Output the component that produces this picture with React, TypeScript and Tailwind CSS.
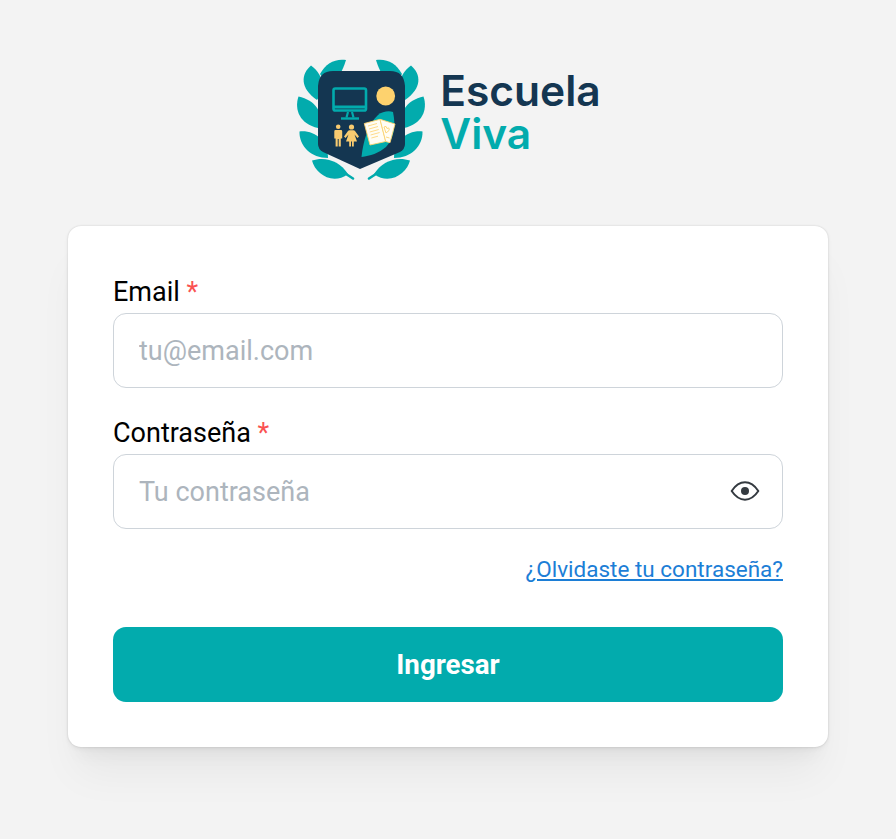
function Leaves() {
  return (
    <g fill="#02abad">
      <path d="M56 10 C45 8.500 36 13 30 24 L38 36 C48 31 53 20 56 10 Z" />
      <path d="M21 15.500 C11 24 9.500 38 27 50 C35 40 35 26 21 15.500 Z" />
      <path d="M8.500 46.500 C4 60 10 74 28 78 C35 63 25 50 8.500 46.500 Z" />
      <path d="M9.500 81.500 C9 96 21 108 38 108 C38 91 25 80 9.500 81.500 Z" />
      <path d="M22 110.500 C25 123 42 136 58 124 C50 111 35 106 22 110.500 Z" />
      <path d="M53 122 L63 128.500" stroke="#02abad" strokeWidth="2.600" strokeLinecap="round" fill="none" />
    </g>
  );
}

function Logo() {
  return (
    <svg width="150" height="140" viewBox="0 0 150 140" className="shrink-0 -ml-[3px] -my-[10px]">
      <Leaves />
      <g transform="translate(142 0) scale(-1 1)">
        <Leaves />
      </g>
      <path
        d="M28 36 Q29 21 43 21 H100 Q114 21 115 36 V94 Q115 99 110 102 L70 119 L33 102 Q28 99 28 94 Z"
        fill="#143651"
      />
      <g stroke="#02abad" fill="none" strokeWidth="2.600">
        <rect x="43.500" y="38.500" width="32.500" height="22" rx="1.800" />
        <path d="M43.500 57 H76" strokeWidth="3" />
        <path d="M58 62 L56.500 67.500 M62 62 L63.500 67.500" strokeWidth="2.200" />
        <path d="M51 68.500 H69" strokeWidth="2.400" />
      </g>
      <circle cx="95.700" cy="46" r="9.400" fill="#fdd26e" />
      <path d="M71.500 107 C73 92 78 74 88 65 C92 61.500 99 60.500 103 62 C106 76 104 88 96 97 C89 103 80 106 71.500 107 Z" fill="#02abad" />
      <g fill="#f8cb70">
        <circle cx="48.200" cy="76.800" r="2.300" />
        <path d="M45.500 80 H51 Q52.200 80 52.200 81.200 V88.500 H50.800 V96.500 H48.700 V89 H47.700 V96.500 H45.600 V88.500 H44.300 V81.200 Q44.300 80 45.500 80 Z" />
        <circle cx="61.500" cy="77" r="2.600" />
        <path d="M59.500 80.300 H63.500 Q64.500 80.300 65 81 L69 86.500 L67.500 88 L64.500 84.500 L67 91.500 H63.800 V96.500 H62 V91.500 H61 V96.500 H59.200 V91.500 H56 L58.500 84.500 L55.500 88 L54 86.500 L58 81 Q58.500 80.300 59.500 80.300 Z" />
      </g>
      <g>
        <path d="M74.300 73.500 L90 69.300 L95.700 91.500 L80 95 Z" fill="#fffdf5" stroke="#fdd26e" strokeWidth="0.900" />
        <path d="M90 69.300 L105 74 L100 92.700 L95.700 91.500 Z" fill="#fffdf5" stroke="#fdd26e" strokeWidth="0.900" />
        <path d="M78 76 L87 73.500 M79 79 L88 76.500 M79.800 82 L88.800 79.500 M80.600 85 L89.600 82.500 M81.400 88 L88 86.200" stroke="#fdd26e" strokeWidth="0.800" />
        <path d="M94 77 Q96.500 75 97 78.500 Q100 77 99 80.500 L96 83 Z M96 87 L99.500 88" stroke="#fdd26e" strokeWidth="0.900" fill="none" />
      </g>
    </svg>
  );
}

function Field({ label, placeholder, eye }: { label: string; placeholder: string; eye?: boolean }) {
  return (
    <div>
      <label className="block text-[27px] leading-[42px] text-black">
        {label} <span className="text-[#fa5252]">*</span>
      </label>
      <div className="relative">
        <input
          placeholder={placeholder}
          className="block w-full h-[75px] rounded-[13px] border border-[#ced4da] bg-white pl-[25px] pr-[60px] text-[27px] outline-none placeholder:text-[#adb5bd]"
        />
        {eye && (
          <svg
            className="absolute right-[22px] top-[21px]"
            width="32"
            height="32"
            viewBox="0 0 24 24"
            fill="none"
            stroke="#343a40"
            strokeWidth="1.500"
            strokeLinecap="round"
            strokeLinejoin="round"
          >
            <path d="M2 12 C5 7.500 8.500 5.500 12 5.500 C15.500 5.500 19 7.500 22 12 C19 16.500 15.500 18.500 12 18.500 C8.500 18.500 5 16.500 2 12 Z" />
            <circle cx="12" cy="12" r="3" fill="#343a40" stroke="none" />
          </svg>
        )}
      </div>
    </div>
  );
}

export default function App() {
  return (
    <div className="min-h-[839px] bg-[#f3f3f3] pt-[60px] font-['Roboto',sans-serif]">
      <div className="flex justify-center items-center h-[120px] mb-[46px]">
        <Logo />
        <div className="font-['Inter',sans-serif] font-semibold text-[42.500px] leading-[43px] pb-[17px] pr-[2px]">
          <div className="text-[#143651]">Escuela</div>
          <div className="text-[#02abad]">Viva</div>
        </div>
      </div>
      <div className="mx-auto w-[760px] rounded-[13px] bg-white p-[45px] shadow-[0_0_2px_rgba(0,0,0,0.16),0_2px_5px_rgba(0,0,0,0.05),0_34px_43px_-9px_rgba(0,0,0,0.05),0_17px_17px_-9px_rgba(0,0,0,0.04)]">
        <div className="flex flex-col gap-[24px]">
          <Field label="Email" placeholder="tu@email.com" />
          <Field label="Contraseña" placeholder="Tu contraseña" eye />
        </div>
        <div className="mt-[23px] flex justify-end">
          <a href="#" className="text-[22.500px] leading-[35px] text-[#1c7ed6] underline">
            ¿Olvidaste tu contraseña?
          </a>
        </div>
        <button className="mt-[40px] block w-full h-[75px] pt-[1px] rounded-[13px] bg-[#02abad] text-white text-[27.700px] font-bold">
          Ingresar
        </button>
      </div>
    </div>
  );
}
